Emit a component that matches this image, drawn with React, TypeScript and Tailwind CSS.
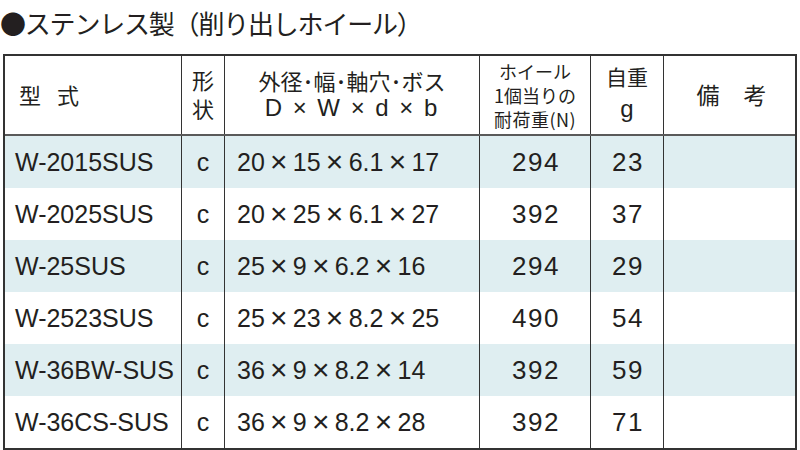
const rows = [
  { model: "W-2015SUS", dims: ["20", "15", "6.1", "17"], load: "294", weight: "23" },
  { model: "W-2025SUS", dims: ["20", "25", "6.1", "27"], load: "392", weight: "37" },
  { model: "W-25SUS", dims: ["25", "9", "6.2", "16"], load: "294", weight: "29" },
  { model: "W-2523SUS", dims: ["25", "23", "8.2", "25"], load: "490", weight: "54" },
  { model: "W-36BW-SUS", dims: ["36", "9", "8.2", "14"], load: "392", weight: "59" },
  { model: "W-36CS-SUS", dims: ["36", "9", "8.2", "28"], load: "392", weight: "71" },
];

const cols = "grid grid-cols-[176px_43px_255px_111px_73px_1fr]";
const jp = "font-['Noto_Sans_CJK_JP',sans-serif]";
const num = "font-['Liberation_Sans','Noto_Sans_CJK_JP',sans-serif]";

function Times() {
  return <span className="inline-block w-[28px] text-center text-[30px] leading-none">×</span>;
}

export default function App() {
  return (
    <div className="h-[450px] w-[800px] overflow-hidden bg-white text-[#231f20]">
      <h1
        className={`${jp} h-[54px] pt-[4px] text-[26px] font-normal leading-[38px] tracking-[-1.2px]`}
      >
        ●ステンレス製（削り出しホイール）
      </h1>

      <div className="ml-[3px] w-[794px] border-2 border-[#333]">
        {/* header */}
        <div className={`${cols} ${jp} h-[80px] border-b-2 border-[#5a5a5a] text-[22px] leading-none`}>
          <div className="flex items-center pb-[2px] pl-[14px] tracking-[16px]">型式</div>
          <div className="flex flex-col items-center justify-center gap-[7px] border-l border-[#333] pb-[4px]">
            <span>形</span>
            <span>状</span>
          </div>
          <div className="flex flex-col items-center justify-center gap-[5px] border-l border-[#333] pb-[2px]">
            <span>外径･幅･軸穴･ボス</span>
            <span className={`${num} text-[24px] tracking-[2px]`}>D × W × d × b</span>
          </div>
          <div className="flex flex-col items-center justify-center gap-[6px] border-l border-[#333] text-[18px]">
            <span>ホイール</span>
            <span>1個当りの</span>
            <span className="tracking-[0.5px]">耐荷重(N)</span>
          </div>
          <div className="flex flex-col items-center justify-center gap-[10px] border-l border-[#333] pb-[4px]">
            <span className="text-[21px]">自重</span>
            <span className={`${num} text-[24px]`}>g</span>
          </div>
          <div className="flex items-center justify-center border-l border-[#333] pb-[2px] pl-[28px] text-[23px] tracking-[24px]">
            備考
          </div>
        </div>

        {/* body */}
        {rows.map((r, i) => (
          <div
            key={r.model}
            className={`${cols} ${num} h-[52px] text-[25px] leading-none ${i % 2 === 0 ? "bg-[#dfeef1]" : "bg-white"}`}
          >
            <div className="flex items-center pl-[10px]">{r.model}</div>
            <div className="flex items-center justify-center border-l border-[#333]">c</div>
            <div className="flex items-center border-l border-[#333] pl-[12px]">
              {r.dims[0]}
              <Times />
              {r.dims[1]}
              <Times />
              {r.dims[2]}
              <Times />
              {r.dims[3]}
            </div>
            <div className="flex items-center justify-center border-l border-[#333] pl-[2px] text-[26px] tracking-[1.5px]">
              {r.load}
            </div>
            <div className="flex items-center justify-center border-l border-[#333] pl-[2px] text-[26px] tracking-[1.5px]">
              {r.weight}
            </div>
            <div className="border-l border-[#333]" />
          </div>
        ))}
      </div>
    </div>
  );
}
